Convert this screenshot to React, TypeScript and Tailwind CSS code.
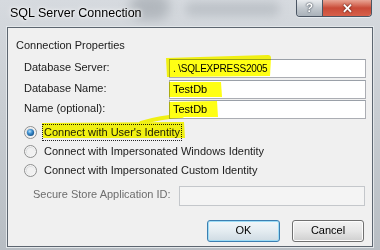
import React from "react";

function Radio({ checked }: { checked?: boolean }) {
  return (
    <svg width="13" height="13" viewBox="0 0 13 13" className="shrink-0">
      <defs>
        <linearGradient id="rg-ring" x1="0" y1="0" x2="1" y2="1">
          <stop offset="0" stopColor="#d2d4d6" />
          <stop offset="1" stopColor="#fbfbfb" />
        </linearGradient>
        <radialGradient id="rg-dot" cx="0.4" cy="0.35" r="0.7">
          <stop offset="0" stopColor="#b9e2fb" />
          <stop offset="0.45" stopColor="#3d8fd0" />
          <stop offset="1" stopColor="#124f86" />
        </radialGradient>
      </defs>
      <circle cx="6.5" cy="6.5" r="6" fill="#f4f4f4" stroke="#8e8f8f" strokeWidth="1" />
      <circle cx="6.5" cy="6.5" r="4.6" fill="url(#rg-ring)" />
      <circle cx="6.5" cy="6.5" r="3.6" fill={checked ? "url(#rg-dot)" : "#f1f1f1"} />
    </svg>
  );
}

function Field({ value, narrow }: { value: string; narrow?: boolean }) {
  return (
    <div className="flex-1 h-[19px] bg-white border border-[#abadb3] border-t-[#9aa0a8] pl-[3px] flex items-center text-black leading-none">
      <span className={narrow ? "text-[10px] tracking-[-0.2px]" : "text-[11px]"}>{value}</span>
    </div>
  );
}

export default function App() {
  return (
    <div className="w-[380px] h-[250px] relative overflow-hidden bg-[#c3c9cf] font-['Liberation_Sans',Arial,sans-serif]">
      {/* Aero glass backdrop */}
      <div className="absolute inset-0 bg-gradient-to-b from-[#d6dadf] via-[#c6cbd0] to-[#b7bdc3]" />
      <div className="absolute left-[130px] top-[-6px] w-[40px] h-[26px] rounded-full bg-[#8f969d] opacity-50 blur-[6px]" />
      <div className="absolute left-[185px] top-[2px] w-[95px] h-[14px] rounded-full bg-[#9aa1a8] opacity-40 blur-[5px]" />

      <div className="relative flex flex-col h-full">
        {/* title bar */}
        <div className="h-[27px] flex items-start justify-between pl-[10px] pr-[8px]">
          <span className="mt-[6px] text-[12.5px] leading-[15px] text-black [text-shadow:0_0_6px_#ffffff,0_0_3px_#ffffff]">
            SQL Server Connection
          </span>
          <div className="flex h-[17px] rounded-b-[4px] overflow-hidden border border-t-0 border-[#4a5563] shadow-[0_1px_0_#e6eaee]">
            <div className="w-[26px] h-full flex items-center justify-center bg-gradient-to-b from-[#e9ecef] via-[#c3c9cf] to-[#a9b1b9] border-r border-[#4a5563] text-white font-bold text-[12px] leading-none [text-shadow:0_0_1px_#38434f,0_0_2px_#38434f]">
              ?
            </div>
            <div className="w-[48px] h-full flex items-center justify-center bg-gradient-to-b from-[#e8a494] via-[#c94a37] to-[#d7604a] text-white font-bold text-[13px] leading-none [text-shadow:0_0_1px_#5a1a10,0_0_2px_#5a1a10]">
              ✕
            </div>
          </div>
        </div>

        {/* client area */}
        <div className="mx-[7px] h-[220px] border border-[#5d6670] bg-[#f0f0f0] shadow-[0_0_0_1px_#e3e7ea] flex flex-col text-[11px] text-[#1a1a1a]">
          <div className="mt-[11px] pl-[8px] leading-[13px]">Connection Properties</div>

          <div className="mt-[7px] flex flex-col gap-[1px] pl-[16px] pr-[6px]">
            <div className="flex items-center">
              <span className="w-[145px] pb-[3px]">Database Server:</span>
              <Field value=". \SQLEXPRESS2005" narrow />
            </div>
            <div className="flex items-center">
              <span className="w-[145px] pb-[3px]">Database Name:</span>
              <Field value="TestDb" />
            </div>
            <div className="flex items-center">
              <span className="w-[145px] pb-[3px]">Name (optional):</span>
              <Field value="TestDb" />
            </div>
          </div>

          <div className="mt-[3px] flex flex-col pl-[16px]">
            <div className="h-[19px] flex items-center gap-[5px]">
              <Radio checked />
              <span className="border border-dotted border-[#222] px-[1px] leading-[15px]">
                Connect with User's Identity
              </span>
            </div>
            <div className="h-[19px] flex items-center gap-[5px]">
              <Radio />
              <span className="border border-transparent px-[1px] leading-[15px]">
                Connect with Impersonated Windows Identity
              </span>
            </div>
            <div className="h-[19px] flex items-center gap-[5px]">
              <Radio />
              <span className="border border-transparent px-[1px] leading-[15px]">
                Connect with Impersonated Custom Identity
              </span>
            </div>
          </div>

          <div className="mt-[6px] flex items-center pl-[25px] pr-[7px]">
            <span className="w-[146px] text-[#6d6d6d] pb-[3px]">Secure Store Application ID:</span>
            <div className="flex-1 h-[20px] bg-[#f4f4f4] border border-[#c4c7cb]" />
          </div>

          <div className="mt-[14px] flex justify-end gap-[12px] pr-[8px]">
            <button className="w-[73px] h-[22px] rounded-[3px] border border-[#3c7fb1] bg-gradient-to-b from-[#f1f6f9] via-[#e4ecf1] to-[#cfdbe3] shadow-[inset_0_0_0_1px_#9ddcf6] text-[11px] text-black leading-none">
              OK
            </button>
            <button className="w-[72px] h-[22px] rounded-[3px] border border-[#707070] bg-gradient-to-b from-[#f2f2f2] via-[#e6e6e6] to-[#cfcfcf] shadow-[inset_0_0_0_1px_#fcfcfc] text-[11px] text-black leading-none">
              Cancel
            </button>
          </div>
        </div>
      </div>

      {/* highlighter marks */}
      <svg
        className="absolute inset-0 pointer-events-none mix-blend-multiply"
        width="380"
        height="250"
        viewBox="0 0 380 250"
      >
        <g fill="#ffff14" stroke="none">
          <path d="M166 58 L268 55 Q271 55 271 58 L270 76 L167 77 Z" />
          <path d="M169 82 L221 82 L222 97 L169 97 Z" />
          <path d="M169 102 L217 101 L218 117 L169 117 Z" />
          <path d="M42 123 L184 122 L185 138 L43 138 Z" />
        </g>
        <path d="M141 123 Q160 117 182 116" stroke="#ffff14" strokeWidth="4" fill="none" strokeLinecap="round" />
      </svg>
    </div>
  );
}
